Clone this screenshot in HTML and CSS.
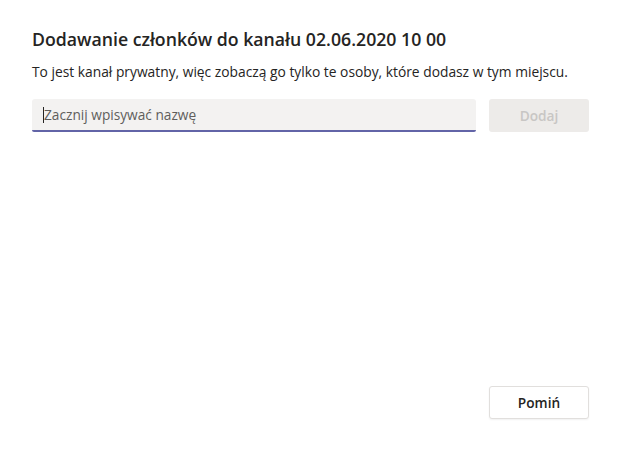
FILE: index.html
```html
<!DOCTYPE html>
<html lang="pl">
<head>
<meta charset="utf-8">
<link rel="stylesheet" href="styles.css">
</head>
<body>
<div class="dialog">
  <h1 class="title">Dodawanie członków do kanału 02.06.2020 10 00</h1>
  <p class="desc">To jest kanał prywatny, więc zobaczą go tylko te osoby, które dodasz w tym miejscu.</p>
  <div class="row">
    <div class="field"><span class="caret"></span><span class="placeholder">Zacznij wpisywać nazwę</span></div>
    <button class="btn btn-disabled">Dodaj</button>
  </div>
  <div class="spacer"></div>
  <div class="footer">
    <button class="btn btn-secondary">Pomiń</button>
  </div>
</div>
</body>
</html>
```

FILE: styles.css
```css
html, body {
  margin: 0;
  padding: 0;
  background: #ffffff;
  width: 621px;
  height: 452px;
  overflow: hidden;
}
.dialog {
  box-sizing: border-box;
  height: 452px;
  padding: 27px 32px 33px 32px;
  display: flex;
  flex-direction: column;
  font-family: "Open Sans", "Noto Sans", sans-serif;
  color: #252423;
}
.title {
  margin: 0;
  font-size: 17.7px;
  font-weight: 600;
  line-height: 24px;
  letter-spacing: 0;
}
.desc {
  margin: 12px 0 0 0;
  font-size: 13.8px;
  line-height: 18px;
  color: #252423;
}
.row {
  margin-top: 18px;
  display: flex;
  gap: 13px;
}
.field {
  flex: 0 0 444px;
  height: 33px;
  box-sizing: border-box;
  background: #f3f2f1;
  border-bottom: 2px solid #6264a7;
  border-radius: 3px 3px 2px 2px;
  display: flex;
  align-items: center;
  padding-left: 11px;
  font-size: 13.7px;
  color: #484644;
}
.caret {
  width: 1px;
  height: 16px;
  background: #252423;
}
.placeholder {
  color: #605e5c;
}
.btn {
  width: 100px;
  height: 33px;
  box-sizing: border-box;
  border-radius: 3px;
  font-family: "Open Sans", "Noto Sans", sans-serif;
  font-size: 13.7px;
  font-weight: 600;
}
.btn-disabled {
  background: #edebe9;
  border: none;
  color: #c8c6c4;
}
.spacer {
  flex: 1;
}
.footer {
  display: flex;
  justify-content: flex-end;
}
.btn-secondary {
  background: #ffffff;
  border: 1px solid #e1dfdd;
  color: #252423;
  box-shadow: 0 1px 2px rgba(0,0,0,0.06);
}
```
